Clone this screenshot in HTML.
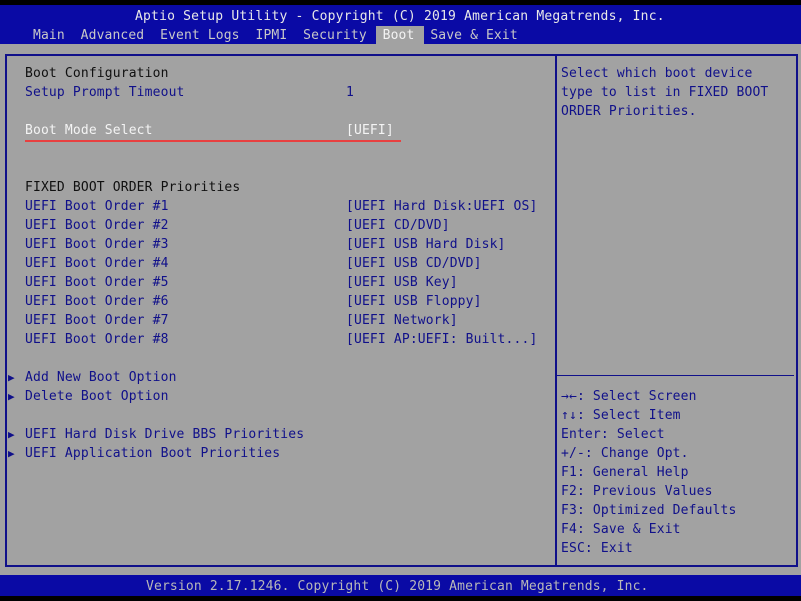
<!DOCTYPE html>
<html><head><style>
body{margin:0;width:801px;height:601px;background:#000;position:relative;overflow:hidden;font-family:"DejaVu Sans Mono","Liberation Mono",monospace;font-size:13px;letter-spacing:0.15px;}
div{position:absolute;white-space:pre;}
.t{line-height:19px;height:19px;}
.n{color:#10108a}
.d{color:#101010}
.w{color:#f4f4f4}
</style></head><body>
<div style="left:0;top:5px;width:801px;height:39px;background:#0a0aa5"></div>
<div style="left:0;top:44px;width:801px;height:531px;background:#a2a2a2"></div>
<div style="left:376px;top:26px;width:48px;height:18px;background:#a2a2a2"></div>
<div class="t" style="left:135px;top:7px;color:#e8e8e8;letter-spacing:0.2px">Aptio Setup Utility - Copyright (C) 2019 American Megatrends, Inc.</div>
<div class="t" style="left:33px;top:26px;color:#c8c8c8;letter-spacing:0.12px">Main  Advanced  Event Logs  IPMI  Security  <span style="color:#f4f4f4">Boot</span>  Save &amp; Exit</div>
<div style="left:5px;top:54px;width:789px;height:509px;border:2px solid #10108a"></div>
<div style="left:555px;top:54px;width:2px;height:511px;background:#10108a"></div>
<div style="left:557px;top:375px;width:237px;height:1px;background:#10108a"></div>
<div style="left:25px;top:140px;width:376px;height:2px;background:#e84040"></div>
<div class="t d" style="left:25px;top:64px">Boot Configuration</div>
<div class="t n" style="left:25px;top:83px">Setup Prompt Timeout</div>
<div class="t n" style="left:346px;top:83px">1</div>
<div class="t w" style="left:25px;top:121px">Boot Mode Select</div>
<div class="t w" style="left:346px;top:121px">[UEFI]</div>
<div class="t d" style="left:25px;top:178px">FIXED BOOT ORDER Priorities</div>
<div class="t n" style="left:25px;top:197px">UEFI Boot Order #1
UEFI Boot Order #2
UEFI Boot Order #3
UEFI Boot Order #4
UEFI Boot Order #5
UEFI Boot Order #6
UEFI Boot Order #7
UEFI Boot Order #8</div>
<div class="t n" style="left:346px;top:197px">[UEFI Hard Disk:UEFI OS]
[UEFI CD/DVD]
[UEFI USB Hard Disk]
[UEFI USB CD/DVD]
[UEFI USB Key]
[UEFI USB Floppy]
[UEFI Network]
[UEFI AP:UEFI: Built...]</div>
<div class="t n" style="left:8px;top:368px;font-size:11px;line-height:19px">▶
▶

▶
▶</div>
<div class="t n" style="left:25px;top:368px">Add New Boot Option
Delete Boot Option

UEFI Hard Disk Drive BBS Priorities
UEFI Application Boot Priorities</div>
<div class="t n" style="left:561px;top:64px">Select which boot device
type to list in FIXED BOOT
ORDER Priorities.</div>
<div class="t n" style="left:561px;top:387px">→←: Select Screen
↑↓: Select Item
Enter: Select
+/-: Change Opt.
F1: General Help
F2: Previous Values
F3: Optimized Defaults
F4: Save &amp; Exit
ESC: Exit</div>
<div style="left:0;top:575px;width:801px;height:21px;background:#0a0aa5"></div>
<div class="t" style="left:146px;top:577px;color:#b8b8b8">Version 2.17.1246. Copyright (C) 2019 American Megatrends, Inc.</div>
</body></html>
